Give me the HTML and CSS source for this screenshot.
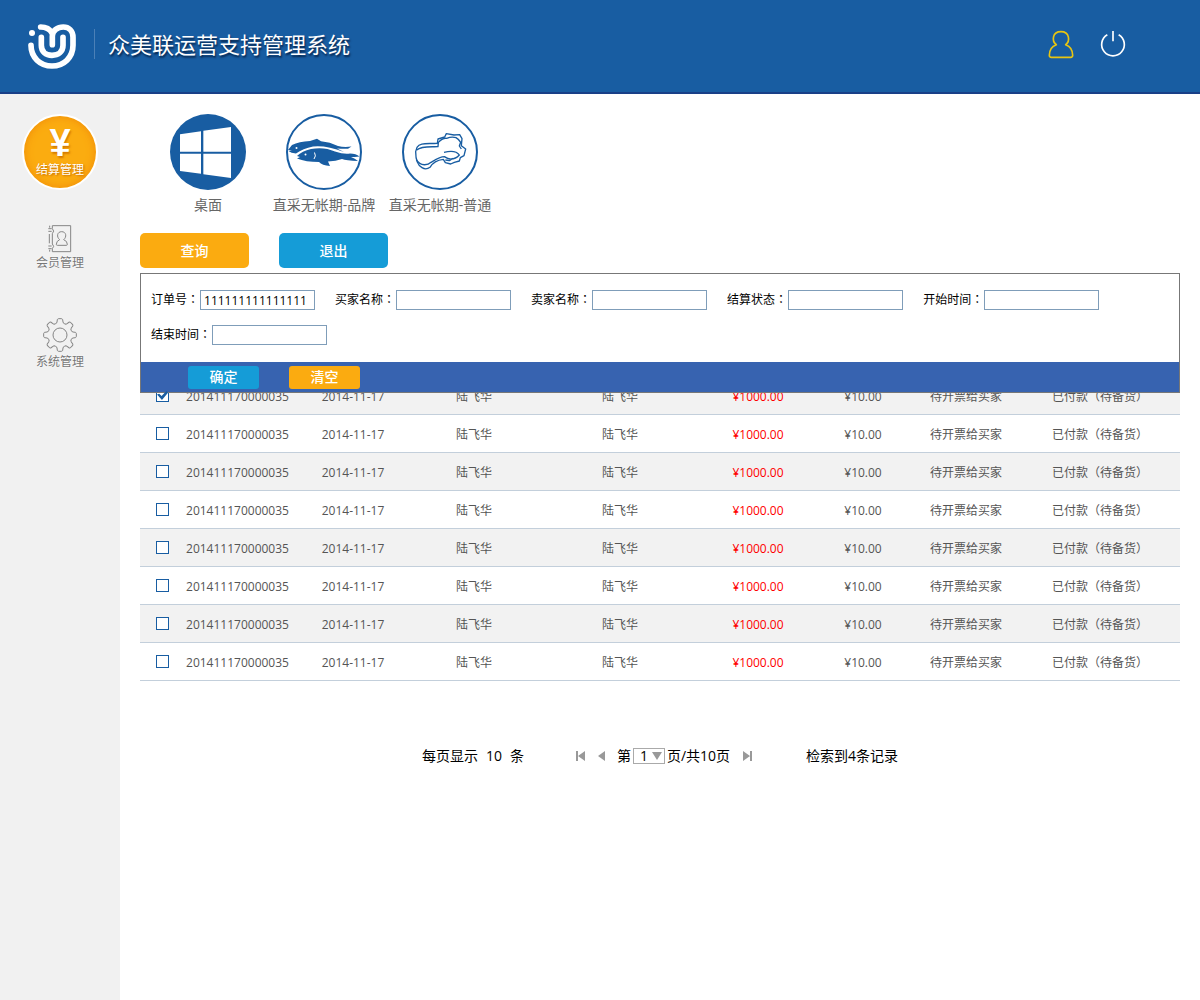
FILE: index.html
```html
<!DOCTYPE html>
<html lang="zh-CN">
<head>
<meta charset="utf-8">
<meta name="viewport" content="width=device-width, initial-scale=1">
<title>众美联运营支持管理系统</title>
<link rel="stylesheet" href="styles.css">
</head>
<body>
<header class="topbar">
  <svg class="logo" viewBox="84 69 144 141" aria-hidden="true">
    <circle cx="96" cy="99" r="9" fill="#fff"/>
    <g fill="none" stroke="#fff" stroke-width="17" stroke-linecap="round">
      <path d="M93 136C93 172 120 198 156 198C192 198 219 172 219 136V112C219 92 206 81 190 81C172 81 157 92 157 108V134"/>
      <path d="M122 81C140 81 150 88 156 99"/>
      <path d="M124 112V136C124 155 137 166 156 166C175 166 189 155 189 136V112"/>
    </g>
  </svg>
  <h1 class="title">众美联运营支持管理系统</h1>
  <div class="account">
    <a href="#" aria-label="用户"><svg class="user-icon" viewBox="54 60 78 87" fill="none" stroke="#e8c512" stroke-width="5" stroke-linejoin="round"><path d="M79 104C65 94 66 65 93 65C119 65 121 94 107 104C121 109 128 122 128 136Q128 142 122 142H64Q58 142 58 136C58 122 65 109 79 104Z"/></svg></a>
    <a href="#" aria-label="退出系统"><svg class="power-icon" viewBox="210 60 78 84" fill="none" stroke="#fff" stroke-width="5"><path d="M232 74A34 34 0 1 0 266 74M249 63V94"/></svg></a>
  </div>
</header>
<div class="layout">
  <nav class="sidebar">
    <a class="side-item side-active" href="#"><span class="yen">¥</span><span class="side-label">结算管理</span></a>
    <a class="side-item side-member" href="#">
      <svg class="book-icon" viewBox="138 373 75 87" fill="none" stroke="#858585" stroke-width="3">
        <path d="M154 378H209V456H154M154 378V387Q162 394 154 402V433Q162 440 154 447V456M146 378V384M142 387H152M142 395H152M145 403V431M142 439H152M142 447H152M146 450V456"/>
        <path d="M176 420C166 412 168 396 182 396C196 396 198 412 188 420Q199 424 199 434Q199 437 196 437H169Q166 437 166 434Q166 424 176 420Z"/>
      </svg>
      <span class="side-label">会员管理</span>
    </a>
    <a class="side-item side-system" href="#">
      <svg class="gear-icon" viewBox="-51 -51 102 102" fill="none" stroke="#858585" stroke-width="3">
        <defs><path id="tooth" d="M-14 -34Q-10 -34 -9 -39L-8 -46Q-7 -49 -4 -49H4Q7 -49 8 -46L9 -39Q10 -34 14 -34"/></defs>
        <use href="#tooth"/><use href="#tooth" transform="rotate(45)"/><use href="#tooth" transform="rotate(90)"/><use href="#tooth" transform="rotate(135)"/><use href="#tooth" transform="rotate(180)"/><use href="#tooth" transform="rotate(225)"/><use href="#tooth" transform="rotate(270)"/><use href="#tooth" transform="rotate(315)"/>
        <circle r="21"/>
      </svg>
      <span class="side-label">系统管理</span>
    </a>
  </nav>
  <main class="content">
    <nav class="modules">
      <a class="module" href="#">
        <svg class="module-icon" viewBox="30 27 228 228"><circle cx="144" cy="141" r="114" fill="#185da2"/><path fill="#fff" d="M60 88L123 79V140H60ZM130 77L213 66V140H130ZM60 146H123V206L60 198ZM130 146H213V219L130 208Z"/></svg>
        <span>桌面</span>
      </a>
      <a class="module" href="#">
        <svg class="module-icon" viewBox="0 0 76 76"><circle cx="38" cy="38" r="37" fill="#fff" stroke="#185da2" stroke-width="2"/>
          <g fill="#185da2">
            <path d="M2 36L6 31Q13 27.500 24 27L31 24.800L35 27.200Q44 28 52 32Q58 33.500 65.500 32.500L62 34.800Q56 35 51 34.500L58 38Q40 31 27 32.500Q17 34.500 10 39.500Q5 39 2.500 37L6 36.300Z"/>
            <path d="M11 42Q16 37 25 35Q38 32.500 49 37.500Q58 40.500 64 39.500Q70 39.500 73.500 42.500Q68 43 65 43Q69 44.500 72 47Q60 46.500 56 45Q50 47 42 47.500L44 52Q36 51.500 33 48Q20 48 11 44.500L14 43Z"/>
          </g>
          <g fill="#fff"><circle cx="10.500" cy="34" r="1"/><circle cx="19.500" cy="40.500" r="1"/></g>
          <path d="M28.500 38.500Q30.500 42 28 45" fill="none" stroke="#fff"/>
        </svg>
        <span>直采无帐期-品牌</span>
      </a>
      <a class="module" href="#">
        <svg class="module-icon" viewBox="216 27 228 228" fill="none" stroke="#185da2"><circle cx="330" cy="141" r="111" fill="#fff" stroke-width="6"/>
          <g stroke-width="4" stroke-linejoin="round"><path d="M261 127C270 112 290 117 322 115L324 102L344 96L349 86L372 90L389 89L396 101L394 122L407 132L402 152L391 158L388 168L373 172L362 177L346 173L340 163C322 165 308 173 300 187Q288 196 276 188C262 180 257 160 257 140Z"/><path d="M260 135C275 122 302 126 324 125L325 112Q338 98 350 100Q365 94 378 98Q388 104 392 112L388 123L394 132M259 164C272 186 295 180 303 172C318 163 330 155 343 155C358 165 374 165 388 150C380 138 362 137 342 142M368 160L358 167L346 165"/></g>
        </svg>
        <span>直采无帐期-普通</span>
      </a>
    </nav>
    <div class="actions">
      <button class="btn btn-orange" type="button">查询</button>
      <button class="btn btn-blue" type="button">退出</button>
    </div>
    <section class="list">
      <form class="search">
        <div class="fields">
          <div class="field"><label for="order">订单号<span class="punct" lang="zh-TW">：</span></label><input id="order" type="text" value="111111111111111"></div>
          <div class="field"><label for="buyer">买家名称<span class="punct" lang="zh-TW">：</span></label><input id="buyer" type="text"></div>
          <div class="field"><label for="seller">卖家名称<span class="punct" lang="zh-TW">：</span></label><input id="seller" type="text"></div>
          <div class="field"><label for="state">结算状态<span class="punct" lang="zh-TW">：</span></label><input id="state" type="text"></div>
          <div class="field"><label for="start">开始时间<span class="punct" lang="zh-TW">：</span></label><input id="start" type="text"></div>
          <div class="field"><label for="end">结束时间<span class="punct" lang="zh-TW">：</span></label><input id="end" type="text"></div>
        </div>
        <div class="search-bar">
          <button class="btn btn-small btn-blue" type="button">确定</button>
          <button class="btn btn-small btn-orange" type="button">清空</button>
        </div>
      </form>
      <table class="orders">
        <colgroup><col class="c-check"><col class="c-order"><col class="c-date"><col class="c-buyer"><col class="c-seller"><col class="c-amount"><col class="c-fee"><col class="c-invoice"><col class="c-state"></colgroup>
        <tbody>
          <tr><td><input type="checkbox" aria-label="选择订单" checked></td><td>201411170000035</td><td>2014-11-17</td><td>陆飞华</td><td>陆飞华</td><td class="amount">¥1000.00</td><td>¥10.00</td><td>待开票给买家</td><td>已付款<span class="punct" lang="zh-TW">（</span>待备货<span class="punct" lang="zh-TW">）</span></td></tr>
          <tr><td><input type="checkbox" aria-label="选择订单"></td><td>201411170000035</td><td>2014-11-17</td><td>陆飞华</td><td>陆飞华</td><td class="amount">¥1000.00</td><td>¥10.00</td><td>待开票给买家</td><td>已付款<span class="punct" lang="zh-TW">（</span>待备货<span class="punct" lang="zh-TW">）</span></td></tr>
          <tr><td><input type="checkbox" aria-label="选择订单"></td><td>201411170000035</td><td>2014-11-17</td><td>陆飞华</td><td>陆飞华</td><td class="amount">¥1000.00</td><td>¥10.00</td><td>待开票给买家</td><td>已付款<span class="punct" lang="zh-TW">（</span>待备货<span class="punct" lang="zh-TW">）</span></td></tr>
          <tr><td><input type="checkbox" aria-label="选择订单"></td><td>201411170000035</td><td>2014-11-17</td><td>陆飞华</td><td>陆飞华</td><td class="amount">¥1000.00</td><td>¥10.00</td><td>待开票给买家</td><td>已付款<span class="punct" lang="zh-TW">（</span>待备货<span class="punct" lang="zh-TW">）</span></td></tr>
          <tr><td><input type="checkbox" aria-label="选择订单"></td><td>201411170000035</td><td>2014-11-17</td><td>陆飞华</td><td>陆飞华</td><td class="amount">¥1000.00</td><td>¥10.00</td><td>待开票给买家</td><td>已付款<span class="punct" lang="zh-TW">（</span>待备货<span class="punct" lang="zh-TW">）</span></td></tr>
          <tr><td><input type="checkbox" aria-label="选择订单"></td><td>201411170000035</td><td>2014-11-17</td><td>陆飞华</td><td>陆飞华</td><td class="amount">¥1000.00</td><td>¥10.00</td><td>待开票给买家</td><td>已付款<span class="punct" lang="zh-TW">（</span>待备货<span class="punct" lang="zh-TW">）</span></td></tr>
          <tr><td><input type="checkbox" aria-label="选择订单"></td><td>201411170000035</td><td>2014-11-17</td><td>陆飞华</td><td>陆飞华</td><td class="amount">¥1000.00</td><td>¥10.00</td><td>待开票给买家</td><td>已付款<span class="punct" lang="zh-TW">（</span>待备货<span class="punct" lang="zh-TW">）</span></td></tr>
          <tr><td><input type="checkbox" aria-label="选择订单"></td><td>201411170000035</td><td>2014-11-17</td><td>陆飞华</td><td>陆飞华</td><td class="amount">¥1000.00</td><td>¥10.00</td><td>待开票给买家</td><td>已付款<span class="punct" lang="zh-TW">（</span>待备货<span class="punct" lang="zh-TW">）</span></td></tr>
        </tbody>
      </table>
    </section>
    <footer class="pager">
      <div class="page-size"><span>每页显示</span><span>10</span><span>条</span></div>
      <div class="page-nav">
        <button class="page-btn" type="button" aria-label="首页"><svg viewBox="0 0 10 10"><path d="M0 0H2V10H0ZM9 0V10L2 5Z"/></svg></button>
        <button class="page-btn page-prev" type="button" aria-label="上一页"><svg viewBox="0 0 10 10"><path d="M8 0V10L1 5Z"/></svg></button>
        <label for="page">第</label>
        <span class="page-select"><select id="page"><option>1</option></select><svg viewBox="0 0 10 8" aria-hidden="true"><path d="M0 0H10L5 8Z"/></svg></span>
        <span>页/共10页</span>
        <button class="page-btn page-last" type="button" aria-label="末页"><svg viewBox="0 0 10 10"><path d="M0 0V10L7 5ZM7 0H9V10H7Z"/></svg></button>
      </div>
      <div>检索到4条记录</div>
    </footer>
  </main>
</div>
</body>
</html>
```
FILE: styles.css
```css
* { box-sizing: border-box; }
body {
  margin: 0;
  min-height: 100vh;
  display: flex;
  flex-direction: column;
  background: #fff;
  color: #000;
  font: 12px/18px "Open Sans", "Noto Sans CJK SC", sans-serif;
}
a { color: inherit; text-decoration: none; }
svg { display: block; }
input, select, button { font: inherit; color: inherit; margin: 0; padding: 0; }
.punct { font-family: "Noto Sans CJK TC", sans-serif; line-height: 1; }

.topbar {
  display: flex;
  align-items: center;
  height: 94px;
  padding: 0 74px 4px 28px;
  background: #185da2;
  border-bottom: 2px solid #193f87;
}
.logo { width: 48px; height: 47px; margin-top: 4px; }
.title {
  margin: 0 0 0 18px;
  padding-left: 13px;
  border-left: 1px solid #4b80b7;
  color: #fff;
  font-size: 22px;
  font-weight: 400;
  line-height: 30px;
  text-shadow: 1px 2px 2px rgba(0, 20, 50, .8);
}
.account { display: flex; gap: 26px; margin-left: auto; }
.user-icon { width: 26px; height: 29px; }
.power-icon { width: 26px; height: 28px; }

.layout { flex: 1; display: flex; }
.sidebar {
  flex: 0 0 120px;
  display: flex;
  flex-direction: column;
  align-items: center;
  padding-top: 20px;
  background: #f1f1f1;
  color: #777;
}
.side-item { display: flex; flex-direction: column; align-items: center; gap: 1px; }
.side-label { text-shadow: 0 0 2px #fff; }
.side-active {
  width: 76px;
  height: 76px;
  border: 2px solid #fff;
  border-radius: 50%;
  background: #fbac10;
  box-shadow: inset 0 0 8px #f08a0a;
  color: #fff;
}
.side-active .side-label { text-shadow: 1px 1px 2px #c56a00; }
.yen {
  margin-top: 10px;
  font: bold 38px/34px "Liberation Sans", sans-serif;
  text-shadow: 1px 2px 2px #d47a00;
}
.side-member { margin-top: 34px; }
.book-icon { width: 25px; height: 29px; }
.side-system { margin-top: 46px; }
.gear-icon { width: 34px; height: 34px; }

.content { flex: 1; min-width: 0; padding: 20px 20px 40px; }
.modules { display: flex; padding-left: 10px; }
.module {
  width: 116px;
  display: flex;
  flex-direction: column;
  align-items: center;
  gap: 5px;
  color: #666;
  font-size: 14px;
  line-height: 20px;
  white-space: nowrap;
}
.module-icon { width: 76px; height: 76px; }

.actions { display: flex; gap: 30px; margin: 18px 0 5px; }
.btn {
  width: 109px;
  height: 35px;
  border: 0;
  border-radius: 5px;
  color: #fff;
  font-size: 14px;
  font-weight: 500;
  line-height: 20px;
}
.btn-orange { background: #fbab10; }
.btn-blue { background: #159cd7; }
.btn-small { width: 71px; height: 23px; border-radius: 3px; }

/* The search panel opens over the top of the order table. */
.list { position: relative; padding-top: 104px; }
.search {
  position: absolute;
  top: 0;
  left: 0;
  right: 0;
  border: 1px solid #777;
  background: #fff;
}
.fields { display: flex; flex-wrap: wrap; gap: 15px 20px; padding: 16px 10px 17px; }
.field { display: flex; align-items: center; gap: 1px; }
.field input {
  width: 115px;
  height: 20px;
  padding: 0 3px;
  border: 1px solid #7f9db9;
  background: #fff;
}
.search-bar {
  display: flex;
  align-items: center;
  gap: 30px;
  height: 30px;
  padding-left: 47px;
  background: #3763b0;
}

.orders { width: 100%; table-layout: fixed; border-collapse: separate; border-spacing: 0; color: #555; }
.orders td { height: 38px; padding: 2px 0 0; border-bottom: 1px solid #c3cfdb; text-align: center; white-space: nowrap; }
.orders td:first-child { padding: 0 0 0 16px; text-align: left; }
.orders tr:nth-child(odd) { background: #f2f2f2; }
.orders .amount { color: #f00; }
.c-check { width: 39px; }
.c-order { width: 117px; }
.c-date { width: 114px; }
.c-buyer { width: 128px; }
.c-seller { width: 164px; }
.c-amount { width: 112px; }
.c-fee { width: 98px; }
.c-invoice { width: 108px; }
.c-state { width: 160px; }
.orders input {
  appearance: none;
  display: block;
  width: 13px;
  height: 13px;
  border: 1px solid #185da2;
  background: #fff;
}
.orders input:checked::after {
  content: "";
  display: block;
  width: 11px;
  height: 11px;
  background: #185da2;
  clip-path: polygon(0 40%, 20% 35%, 42% 55%, 85% 10%, 100% 25%, 45% 90%);
}

.pager {
  display: flex;
  justify-content: center;
  align-items: center;
  margin-top: 65px;
  font-size: 14px;
  line-height: 20px;
}
.page-size { display: flex; gap: 8px; margin-right: 52px; }
.page-nav { display: flex; align-items: center; gap: 2px; margin-right: 53px; }
.page-btn { width: 10px; height: 10px; border: 0; background: none; }
.page-btn svg { width: 10px; height: 10px; fill: #999; }
.page-prev { margin: 0 8px 0 9px; }
.page-last { margin-left: 11px; }
.page-select { position: relative; }
.page-select select {
  appearance: none;
  display: block;
  width: 32px;
  height: 16px;
  padding-left: 6px;
  border: 1px solid #aaa;
  border-radius: 0;
  background: #fff;
  line-height: 14px;
}
.page-select svg {
  position: absolute;
  top: 4px;
  right: 3px;
  width: 10px;
  height: 8px;
  fill: #999;
  pointer-events: none;
}
```
